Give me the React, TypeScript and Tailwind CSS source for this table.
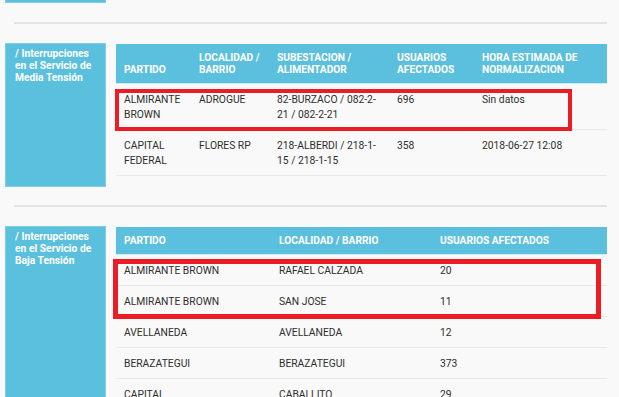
import React from 'react';

type Col = { label: string; width: string };

const mediaCols: Col[] = [
    { label: 'PARTIDO', width: 'w-[75px]' },
    { label: 'LOCALIDAD / BARRIO', width: 'w-[78px]' },
    { label: 'SUBESTACION / ALIMENTADOR', width: 'w-[120px]' },
    { label: 'USUARIOS AFECTADOS', width: 'w-[85px]' },
    { label: 'HORA ESTIMADA DE NORMALIZACION', width: 'w-[133px]' },
];

const mediaRows = [
    ['ALMIRANTE BROWN', 'ADROGUE', '82-BURZACO / 082-2-21 / 082-2-21', '696', 'Sin datos'],
    ['CAPITAL FEDERAL', 'FLORES RP', '218-ALBERDI / 218-1-15 / 218-1-15', '358', '2018-06-27 12:08'],
];

const bajaCols: Col[] = [
    { label: 'PARTIDO', width: 'w-[155px]' },
    { label: 'LOCALIDAD / BARRIO', width: 'w-[161px]' },
    { label: 'USUARIOS AFECTADOS', width: 'w-[175px]' },
];

const bajaRows = [
    ['ALMIRANTE BROWN', 'RAFAEL CALZADA', '20'],
    ['ALMIRANTE BROWN', 'SAN JOSE', '11'],
    ['AVELLANEDA', 'AVELLANEDA', '12'],
    ['BERAZATEGUI', 'BERAZATEGUI', '373'],
    ['CAPITAL', 'CABALLITO', '29'],
];

const Sidebar = ({ lines, className }: { lines: string; className: string }) => (
    <div className={`w-[101px] shrink-0 bg-[#5bc0de] border border-[#7ccde6] px-[9px] pt-[4px] text-white font-bold text-[10.3px] leading-[12px] ${className}`}>
        {lines}
    </div>
);

const App = () => {
    return (
        <div className="w-[619px] h-[397px] overflow-hidden bg-[#f9f9f9] text-[#2e2e2e] font-['Roboto',sans-serif]">
            {/* previous block tail */}
            <div className="ml-[5px] w-[101px] h-[3px] bg-[#5bc0de] border-x border-b border-[#7ccde6]" />
            <div className="ml-[14px] mt-[19px] w-[593px] h-[2px] bg-[#e3e3e3]" />

            {/* Media tension */}
            <div className="flex gap-[10px] ml-[5px] mt-[19px]">
                <Sidebar lines="/ Interrupciones en el Servicio de Media Tensión" className="h-[144px]" />
                <div className="relative w-[491px] mt-[1px]">
                    <div className="flex items-end bg-[#5bc0de] border-b border-[#cfe9f2] text-white font-bold text-[10.2px] leading-[12px]">
                        {mediaCols.map((c) => (
                            <div key={c.label} className={`${c.width} shrink-0 px-2 pt-2 pb-[7px]`}>
                                {c.label}
                            </div>
                        ))}
                    </div>
                    {mediaRows.map((r, i) => (
                        <div key={i} className="flex text-[10.3px] leading-[15px] border-b border-[#e8e8e8]">
                            {r.map((cell, j) => (
                                <div key={j} className={`${mediaCols[j].width} shrink-0 px-2 pt-2 pb-[7px]`}>
                                    {cell}
                                </div>
                            ))}
                        </div>
                    ))}
                    <div className="absolute left-[-1px] top-[45px] w-[457px] h-[42px] border-4 border-[#ec1c24]" />
                </div>
            </div>

            <div className="ml-[14px] mt-[18px] w-[593px] h-[2px] bg-[#e3e3e3]" />

            {/* Baja tension */}
            <div className="flex gap-[10px] ml-[5px] mt-[19px]">
                <Sidebar lines="/ Interrupciones en el Servicio de Baja Tensión" className="h-[200px]" />
                <div className="relative w-[491px] mt-[1px]">
                    <div className="flex bg-[#5bc0de] border-b border-[#cfe9f2] text-white font-bold text-[10.2px] leading-[12px]">
                        {bajaCols.map((c) => (
                            <div key={c.label} className={`${c.width} shrink-0 px-2 pt-[8px] pb-[7px]`}>
                                {c.label}
                            </div>
                        ))}
                    </div>
                    {bajaRows.map((r, i) => (
                        <div key={i} className="flex text-[10.3px] leading-[15px] border-b border-[#e8e8e8]">
                            {r.map((cell, j) => (
                                <div key={j} className={`${bajaCols[j].width} shrink-0 px-2 pt-2 pb-[7px]`}>
                                    {cell}
                                </div>
                            ))}
                        </div>
                    ))}
                    <div className="absolute left-[-3px] top-[32px] w-[488px] h-[60px] border-[5px] border-[#ec1c24]" />
                </div>
            </div>
        </div>
    );
};

export default App;
